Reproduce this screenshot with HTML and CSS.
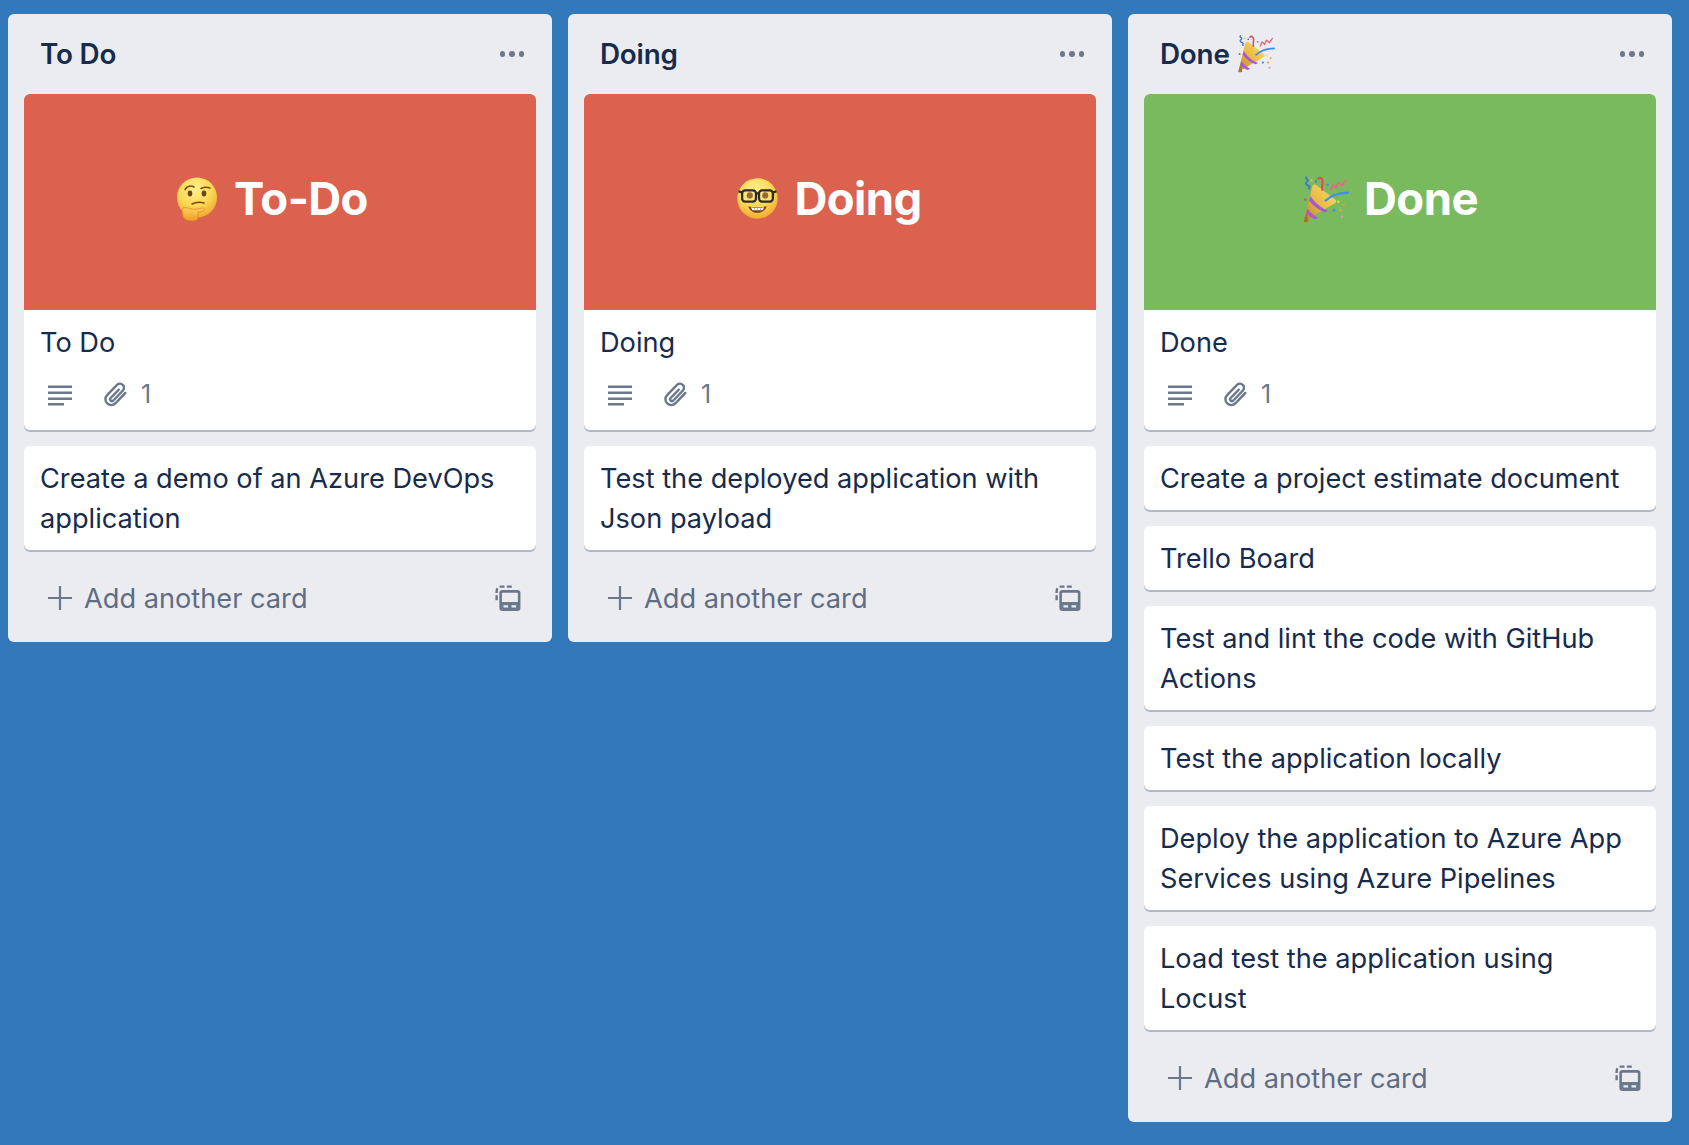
FILE: index.html
```html
<!DOCTYPE html>
<html lang="en">
<head>
<meta charset="utf-8">
<title>Board</title>
<link rel="stylesheet" href="styles.css">
</head>
<body>
<svg class="defs" width="0" height="0" aria-hidden="true">
  <defs>
    <radialGradient id="face" cx="45%" cy="30%" r="75%">
      <stop offset="0" stop-color="#fff08a"/>
      <stop offset=".55" stop-color="#fdd755"/>
      <stop offset="1" stop-color="#eda42c"/>
    </radialGradient>
    <linearGradient id="hand" x1="0" y1="0" x2="0" y2="1">
      <stop offset="0" stop-color="#fdd05a"/>
      <stop offset="1" stop-color="#f09a26"/>
    </linearGradient>
    <linearGradient id="cone" x1="0" y1="1" x2="1" y2="0">
      <stop offset="0" stop-color="#b9812a"/>
      <stop offset=".5" stop-color="#eabb45"/>
      <stop offset="1" stop-color="#fbe36a"/>
    </linearGradient>
    <symbol id="e-think" viewBox="0 0 42 44">
      <circle cx="21" cy="20.500" r="20" fill="url(#face)"/>
      <path d="M9 12.500c2-3.500 6-4.500 9-2.500" fill="none" stroke="#7a4a17" stroke-width="1.600" stroke-linecap="round"/>
      <path d="M25 11.500c3-1.500 6-1.700 9-.6" fill="none" stroke="#7a4a17" stroke-width="1.600" stroke-linecap="round"/>
      <ellipse cx="14" cy="16.500" rx="2.300" ry="3" fill="#6d4318"/>
      <ellipse cx="28" cy="16.500" rx="2.300" ry="3" fill="#6d4318"/>
      <path d="M16 27c4-2 8-2.200 12-1" fill="none" stroke="#7a4a17" stroke-width="1.600" stroke-linecap="round"/>
      <path d="M7 31c3-.6 6 0 8 1 3 1 8-.6 12-1 2-.2 2.600 2 .8 2.800-2 .8-4 1.200-6 1.800 1 2 .6 6-1 7.300-2.600 1.600-9 1.400-11.600-.6C6 40 5.500 33 7 31z" fill="url(#hand)" stroke="#d98a22" stroke-width=".7"/>
    </symbol>
    <symbol id="e-nerd" viewBox="0 0 40 40">
      <circle cx="20" cy="20" r="19.700" fill="url(#face)"/>
      <circle cx="12.500" cy="17" r="3" fill="#7a4a17"/>
      <circle cx="27.500" cy="17" r="3" fill="#7a4a17"/>
      <rect x="5" y="12" width="13.500" height="11" rx="3" fill="#fff3a5" fill-opacity=".2" stroke="#2b2a26" stroke-width="2.200"/>
      <rect x="21.500" y="12" width="13.500" height="11" rx="3" fill="#fff3a5" fill-opacity=".2" stroke="#2b2a26" stroke-width="2.200"/>
      <path d="M18 15h4M5 14 1.500 13M35 14l3.500-1" stroke="#2b2a26" stroke-width="2.200" fill="none"/>
      <path d="M11 27.500c5 1.500 13 1.500 18 0-1 4-5 6.500-9 6.500s-8-2.500-9-6.500z" fill="#7a3f17"/>
      <path d="M13.500 28.500c4 .8 9 .8 13 0l-1.500 3H15z" fill="#fff"/>
      <path d="M17 29v2.500M20 29.200v2.500M23 29v2.500" stroke="#9b8f80" stroke-width=".6"/>
    </symbol>
    <symbol id="e-party" viewBox="0 0 44 45">
      <path d="M1.500 43.500 9.500 11c.6-2 2.500-2.500 4-1.500l17.500 13.500c1.600 1.200 1 3.200-.8 4z" fill="url(#cone)"/>
      <path d="M1.500 43.500c1 1 2.500 1 4.500 0L4.500 35z" fill="#a8741f"/>
      <path d="M6.500 24c4.500 5.500 9.500 9.400 15 11l3.200-1.400c-6.500-2.300-12-6.600-17-13.800zM3.800 35.500c2.500 3 5.200 5 8.200 6l3.300-1.400c-3.300-1.300-6.800-4-10.200-8.500z" fill="#a855d8"/>
      <path d="M22 24c6-5 11-7 21-7.500" fill="none" stroke="#3f8cf0" stroke-width="2" stroke-linecap="round"/>
      <path d="M19 14C18 10 20 8 19 4.500c-.5-2-3-2.500-4-.8" fill="none" stroke="#e0475f" stroke-width="1.800" stroke-linecap="round"/>
      <path d="M27 14l2-5 3 3 2-5 3.500 3 3.500-5" fill="none" stroke="#e56a80" stroke-width="1.600" stroke-linejoin="round" stroke-linecap="round"/>
      <path d="M4 2c-2 1.500 3 2.500 1 4s-2 3 1 4-1 2.500 1 3" fill="none" stroke="#3d72dc" stroke-width="1.600" stroke-linecap="round"/>
      <circle cx="9" cy="5" r="1" fill="#e6c93a"/>
      <circle cx="13" cy="6" r="1" fill="#3d72dc"/>
      <circle cx="24" cy="9" r="1.100" fill="#3f8cf0"/>
      <circle cx="3" cy="23" r="1.200" fill="#d65050"/>
      <circle cx="34" cy="25" r="1.100" fill="#f0e040"/>
      <circle cx="30" cy="33" r="1.300" fill="#3f8cf0"/>
      <circle cx="39" cy="28" r="1.100" fill="#e9a13d"/>
      <circle cx="36" cy="33" r="1.200" fill="#e9a13d"/>
      <circle cx="37.500" cy="39" r="1.200" fill="#e88cb0"/>
    </symbol>
    <symbol id="i-lines" viewBox="0 0 24 24">
      <path d="M0 3.500h24v2.400H0zM0 9.500h24v2.400H0zM0 15.500h24v2.400H0zM0 21h16v2.400H0z" fill="currentColor"/>
    </symbol>
    <symbol id="i-clip" viewBox="0 0 24 24">
      <path d="M20.500 10.500 11 20.500a5.600 5.600 0 0 1-8-7.900l9.700-10a3.900 3.900 0 0 1 5.600 5.400l-9.400 9.800a1.700 1.700 0 0 1-2.500-2.400l7.800-8" fill="none" stroke="currentColor" stroke-width="2.300" stroke-linecap="round" stroke-linejoin="round"/>
    </symbol>
    <symbol id="i-plus" viewBox="0 0 24 24">
      <path d="M10.900 0h2.200v10.900H24v2.200H13.100V24h-2.200V13.100H0v-2.200h10.900z" fill="currentColor"/>
    </symbol>
    <symbol id="i-tpl" viewBox="0 0 24 24">
      <path d="M1.500 14V5.500a4 4 0 0 1 4-4h12" fill="none" stroke="currentColor" stroke-width="2.200" stroke-dasharray="4.500 2.200"/>
      <path fill-rule="evenodd" d="M7 4.500h13.500a3 3 0 0 1 3 3V21a3 3 0 0 1-3 3H7a3 3 0 0 1-3-3V7.500a3 3 0 0 1 3-3zm-.6 2.700v8.600h14.700V7.200zm1.400 11.500v2h4.300v-2zm7.400 0v2h4.300v-2z" fill="currentColor"/>
    </symbol>
  </defs>
</svg>

<main class="board">
  <section class="list">
    <header class="list-head">
      <h2 class="list-title">To Do</h2>
      <span class="dots"><i></i><i></i><i></i></span>
    </header>
    <div class="cards">
      <article class="card">
        <div class="cover cover-red">
          <svg class="emoji emoji-think"><use href="#e-think"/></svg>
          <span class="cover-text">To-Do</span>
        </div>
        <div class="card-title">To Do</div>
        <div class="badges">
          <svg class="ic-lines"><use href="#i-lines"/></svg>
          <svg class="ic-clip"><use href="#i-clip"/></svg>
          <span class="count">1</span>
        </div>
      </article>
      <article class="card"><div class="card-title">Create a demo of an Azure DevOps application</div></article>
    </div>
    <footer class="add">
      <svg class="ic-plus"><use href="#i-plus"/></svg>
      <span class="add-text">Add another card</span>
      <svg class="ic-tpl"><use href="#i-tpl"/></svg>
    </footer>
  </section>

  <section class="list">
    <header class="list-head">
      <h2 class="list-title">Doing</h2>
      <span class="dots"><i></i><i></i><i></i></span>
    </header>
    <div class="cards">
      <article class="card">
        <div class="cover cover-red">
          <svg class="emoji emoji-nerd"><use href="#e-nerd"/></svg>
          <span class="cover-text">Doing</span>
        </div>
        <div class="card-title">Doing</div>
        <div class="badges">
          <svg class="ic-lines"><use href="#i-lines"/></svg>
          <svg class="ic-clip"><use href="#i-clip"/></svg>
          <span class="count">1</span>
        </div>
      </article>
      <article class="card"><div class="card-title">Test the deployed application with Json payload</div></article>
    </div>
    <footer class="add">
      <svg class="ic-plus"><use href="#i-plus"/></svg>
      <span class="add-text">Add another card</span>
      <svg class="ic-tpl"><use href="#i-tpl"/></svg>
    </footer>
  </section>

  <section class="list">
    <header class="list-head">
      <h2 class="list-title">Done <svg class="emoji-title"><use href="#e-party"/></svg></h2>
      <span class="dots"><i></i><i></i><i></i></span>
    </header>
    <div class="cards">
      <article class="card">
        <div class="cover cover-green">
          <svg class="emoji emoji-party"><use href="#e-party"/></svg>
          <span class="cover-text">Done</span>
        </div>
        <div class="card-title">Done</div>
        <div class="badges">
          <svg class="ic-lines"><use href="#i-lines"/></svg>
          <svg class="ic-clip"><use href="#i-clip"/></svg>
          <span class="count">1</span>
        </div>
      </article>
      <article class="card"><div class="card-title">Create a project estimate document</div></article>
      <article class="card"><div class="card-title">Trello Board</div></article>
      <article class="card"><div class="card-title">Test and lint the code with GitHub Actions</div></article>
      <article class="card"><div class="card-title">Test the application locally</div></article>
      <article class="card"><div class="card-title">Deploy the application to Azure App Services using Azure Pipelines</div></article>
      <article class="card"><div class="card-title">Load test the application using Locust</div></article>
    </div>
    <footer class="add">
      <svg class="ic-plus"><use href="#i-plus"/></svg>
      <span class="add-text">Add another card</span>
      <svg class="ic-tpl"><use href="#i-tpl"/></svg>
    </footer>
  </section>
</main>
</body>
</html>
```
FILE: styles.css
```css
* { box-sizing: border-box; }
html, body { margin: 0; height: 100%; }
body {
  background: #3278bb;
  font-family: Inter, "Liberation Sans", sans-serif;
  color: #172b4d;
  overflow: hidden;
}
.defs { position: absolute; }
.board {
  display: flex;
  align-items: flex-start;
  gap: 16px;
  padding: 14px 8px;
}
.list {
  width: 544px;
  flex: none;
  background: #ebecf0;
  border-radius: 6px;
  padding: 0 16px;
}
.list-head {
  height: 80px;
  display: flex;
  align-items: center;
  justify-content: space-between;
  padding: 0 12px 0 16px;
}
.list-title {
  margin: 0;
  font-size: 27.800px;
  font-weight: 600;
  line-height: 40px;
  display: flex;
  align-items: center;
  gap: 8px;
  letter-spacing: -0.2px;
}
.emoji-title { width: 38px; height: 39px; margin-top: -2px; margin-left: -1px; }
.dots { display: flex; gap: 4px; }
.dots i { width: 5.500px; height: 5.500px; border-radius: 50%; background: #6b778c; }
.cards { display: flex; flex-direction: column; gap: 16px; }
.card {
  background: #fff;
  border-radius: 6px;
  box-shadow: 0 2px 0 #b1b8c6;
  overflow: hidden;
}
.cover {
  height: 216px;
  display: flex;
  align-items: center;
  justify-content: center;
  padding: 0 16px 7px 0;
}
.cover-red { background: #da624f; }
.cover-green { background: #7aba5f; padding-right: 20px; }
.cover-text {
  color: #fff;
  font-size: 45.500px;
  font-weight: 700;
  line-height: 50px;
  letter-spacing: -0.6px;
}
.emoji { flex: none; }
.emoji-think { width: 42px; height: 44px; margin-right: 16px; }
.emoji-nerd { width: 41px; height: 41px; margin: 0 16px 0 -5px; }
.emoji-party { width: 47px; height: 48px; margin-right: 15px; }
.card-title {
  padding: 13px 16px 11px;
  font-size: 27.200px;
  line-height: 40px;
}
.badges {
  height: 68px;
  margin-top: -12px;
  padding: 16px 0 20px 24px;
  display: flex;
  align-items: center;
  color: #6b778c;
}
.ic-lines { width: 24px; height: 24px; }
.ic-clip { width: 25px; height: 25px; margin-left: 32px; }
.count { margin-left: 12px; font-size: 25px; line-height: 32px; }
.add {
  height: 72px;
  margin: 12px 0 8px;
  display: flex;
  align-items: center;
  padding: 0 15px 0 24px;
  color: #5e6c84;
}
.ic-plus { width: 24px; height: 24px; flex: none; color: #6b778c; }
.add-text { margin: 2px 0 0 12px; font-size: 27.200px; line-height: 40px; flex: 1; }
.ic-tpl { width: 26px; height: 26px; flex: none; color: #6b778c; margin-top: -1px; }
```
